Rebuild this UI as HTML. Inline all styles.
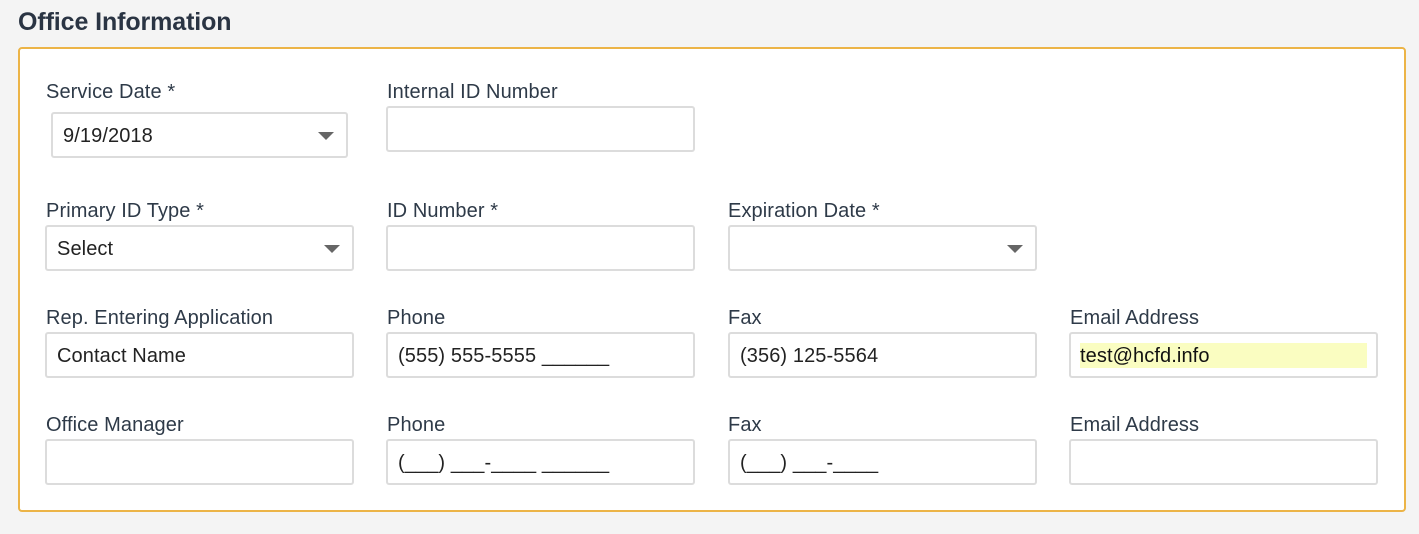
<!DOCTYPE html>
<html><head><style>
body{margin:0;background:#f4f4f4;width:1419px;height:534px;overflow:hidden;font-family:"Liberation Sans",sans-serif;position:relative}
h1{position:absolute;left:18px;top:8px;margin:0;font-size:25px;font-weight:bold;color:#2a3443;letter-spacing:-0.1px}
.panel{position:absolute;left:18px;top:47px;width:1384px;height:461px;border:2px solid #ecb447;border-radius:4px;background:#fff}
.l{position:absolute;font-size:20px;color:#2e3a48;line-height:22px;letter-spacing:0.1px}
.i{position:absolute;box-sizing:border-box;height:46px;border:2px solid #dcdcdc;border-radius:3px;background:#fff;font-size:20px;color:#222;line-height:44px;padding-left:10px;letter-spacing:0.1px}
.c{position:absolute;right:12px;top:18px;width:0;height:0;border-left:8px solid transparent;border-right:8px solid transparent;border-top:8px solid #666}
</style></head><body>
<h1>Office Information</h1>
<div class="panel"></div>
<div class="l" style="left:46px;top:81px">Service Date *</div>
<div class="i" style="left:51px;top:112px;width:297px">9/19/2018<span class="c"></span></div>
<div class="l" style="left:387px;top:81px">Internal ID Number</div>
<div class="i" style="left:386px;top:106px;width:309px"></div>

<div class="l" style="left:46px;top:200px">Primary ID Type *</div>
<div class="i" style="left:45px;top:225px;width:309px">Select<span class="c"></span></div>
<div class="l" style="left:387px;top:200px">ID Number *</div>
<div class="i" style="left:386px;top:225px;width:309px"></div>
<div class="l" style="left:728px;top:200px">Expiration Date *</div>
<div class="i" style="left:728px;top:225px;width:309px"><span class="c"></span></div>

<div class="l" style="left:46px;top:307px">Rep. Entering Application</div>
<div class="i" style="left:45px;top:332px;width:309px">Contact Name</div>
<div class="l" style="left:387px;top:307px">Phone</div>
<div class="i" style="left:386px;top:332px;width:309px">(555) 555-5555 ______</div>
<div class="l" style="left:728px;top:307px">Fax</div>
<div class="i" style="left:728px;top:332px;width:309px">(356) 125-5564</div>
<div class="l" style="left:1070px;top:307px">Email Address</div>
<div class="i" style="left:1069px;top:332px;width:309px;padding-left:9px"><span style="display:block;margin-top:9px;width:287px;height:25px;background:#fafdc1;line-height:26px;color:#111">test@hcfd.info</span></div>

<div class="l" style="left:46px;top:414px">Office Manager</div>
<div class="i" style="left:45px;top:439px;width:309px"></div>
<div class="l" style="left:387px;top:414px">Phone</div>
<div class="i" style="left:386px;top:439px;width:309px">(___) ___-____ ______</div>
<div class="l" style="left:728px;top:414px">Fax</div>
<div class="i" style="left:728px;top:439px;width:309px">(___) ___-____</div>
<div class="l" style="left:1070px;top:414px">Email Address</div>
<div class="i" style="left:1069px;top:439px;width:309px"></div>
</body></html>
